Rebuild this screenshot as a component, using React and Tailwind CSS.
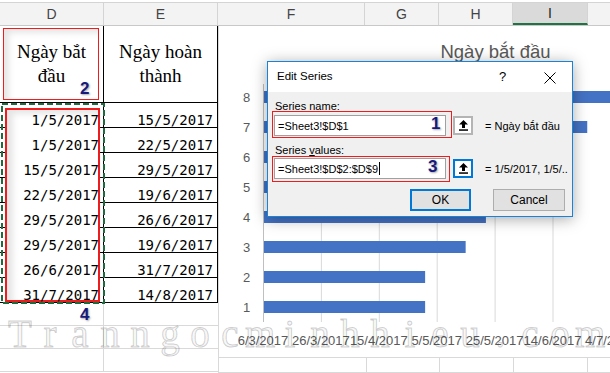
import React from "react";

const rows = [
  ["1/5/2017", "15/5/2017"],
  ["1/5/2017", "22/5/2017"],
  ["15/5/2017", "29/5/2017"],
  ["22/5/2017", "19/6/2017"],
  ["29/5/2017", "26/6/2017"],
  ["29/5/2017", "19/6/2017"],
  ["26/6/2017", "31/7/2017"],
  ["31/7/2017", "14/8/2017"],
];

const barDays = [56, 56, 70, 77, 84, 84, 112, 147];
const xLabels = ["6/3/2017", "26/3/2017", "15/4/2017", "5/5/2017", "25/5/2017", "14/6/2017", "4/7/2017"];
const watermark = "Tranngocminhhieu.com".split("");

function Chart() {
  const x0 = 44;
  const step = 57.9;
  const perDay = step / 20;
  return (
    <svg width="392" height="331" className="block" style={{ fontFamily: "'Liberation Sans', Arial, sans-serif" }}>
      <text x="276.5" y="32" textAnchor="middle" fontSize="18.5" fill="#595959">Ngày bắt đầu</text>
      {xLabels.map((_, i) => (
        <line key={"g" + i} x1={x0 + i * step + 0.5} x2={x0 + i * step + 0.5} y1="58" y2="296" stroke={i === 0 ? "#bfbfbf" : "#d9d9d9"} strokeWidth="1" />
      ))}
      {barDays.map((d, i) => {
        const cy = 281 - i * 30;
        return (
          <g key={"b" + i}>
            <rect x={x0 + 1} y={cy - 6} width={d * perDay - 1} height="12" fill="#4472c4" />
            <text x="27.5" y={cy + 4.5} textAnchor="middle" fontSize="13" fill="#595959">{i + 1}</text>
          </g>
        );
      })}
      {xLabels.map((l, i) => (
        <text key={"l" + i} x={x0 + i * step} y="319" textAnchor="middle" fontSize="13" fill="#595959">{l}</text>
      ))}
    </svg>
  );
}

function UpIcon() {
  return (
    <svg width="9" height="11" viewBox="0 0 9 11">
      <path d="M4.5 0 L9 4.5 L6 4.5 L6 8 L3 8 L3 4.5 L0 4.5 Z" fill="#000" />
      <rect x="0" y="9.3" width="9" height="1.5" fill="#000" />
    </svg>
  );
}

export default function App() {
  return (
    <div className="relative w-[610px] h-[373px] overflow-hidden bg-white">
      {/* Column headers */}
      <div className="h-[3px] bg-white border-b border-[#d4d4d4]" />
      <div className="flex h-[23px] bg-[#f3f3f3] border-b border-[#c8c8c8] text-[14px] text-[#444] font-['Liberation_Sans',Arial,sans-serif]">
        <div className="w-[104px] flex items-center justify-center border-r border-[#d4d4d4]">D</div>
        <div className="w-[114px] flex items-center justify-center border-r border-[#d4d4d4]">E</div>
        <div className="w-[147px] flex items-center justify-center border-r border-[#d4d4d4]">F</div>
        <div className="w-[74px] flex items-center justify-center border-r border-[#d4d4d4]">G</div>
        <div className="w-[74px] flex items-center justify-center border-r border-[#d4d4d4]">H</div>
        <div className="w-[75px] flex items-center justify-center bg-[#dadada] border-b-2 border-b-[#217346] border-r border-[#d4d4d4] text-[#222]">I</div>
        <div className="flex-1" />
      </div>

      {/* Body */}
      <div className="flex h-[347px]">
        {/* Table columns D and E */}
        <div className="w-[218px] flex flex-col">
          <div className="flex h-[77px] border-b border-black font-['Liberation_Serif','Times_New_Roman',serif] text-[19px] leading-[24px] text-black">
            <div className="w-[104px] flex items-center justify-center text-center border-r border-black">
              <span className="relative z-[2]">Ngày bắt<br />đầu</span>
            </div>
            <div className="w-[114px] flex items-center justify-center text-center border-r border-black">
              <span>Ngày hoàn<br />thành</span>
            </div>
          </div>
          {rows.map((r, i) => (
            <div key={i} className="flex h-[25px] border-b border-black font-['DejaVu_Sans_Mono',monospace] text-[14px] leading-[14px] text-black">
              <div className="w-[104px] flex items-end justify-end pr-[4px] border-r border-black">
                <span className="relative z-[2]">{r[0]}</span>
              </div>
              <div className="w-[114px] flex items-end justify-end pr-[4px] border-r border-black">
                <span>{r[1]}</span>
              </div>
            </div>
          ))}
          {[0, 1, 2].map((i) => (
            <div key={"e" + i} className="flex h-[23px] border-b border-[#d9d9d9]">
              <div className="w-[104px] border-r border-[#d9d9d9]" />
              <div className="flex-1" />
            </div>
          ))}
        </div>

        {/* Chart + cells under it */}
        <div className="flex-1 flex flex-col">
          <div className="h-[332px] border-l border-b border-[#d9d9d9] bg-white">
            <Chart />
          </div>
          <div className="flex h-[15px] border-l border-b border-[#d9d9d9]">
            <div className="w-[148px] border-r border-[#d9d9d9]" />
            <div className="w-[73px] border-r border-[#d9d9d9]" />
            <div className="w-[74px] border-r border-[#d9d9d9]" />
            <div className="w-[74px] border-r border-[#d9d9d9]" />
            <div className="flex-1" />
          </div>
        </div>
      </div>

      {/* Annotation: red box header D */}
      <div className="absolute left-[3px] top-[28px] w-[96px] h-[72px] z-[1] bg-white border-[1.5px] border-[#ee1c1c] shadow-[inset_5px_4px_6px_rgba(0,0,0,0.10)]" />
      {/* Annotation: red box D data */}
      <div className="absolute left-[5px] top-[108px] w-[95px] h-[194px] z-[1] bg-white border-2 border-[#ee1c1c] shadow-[inset_6px_4px_6px_rgba(0,0,0,0.10)]" />
      {/* Marquee selection */}
      <svg className="absolute left-[1px] top-[103px] z-[3]" width="105" height="202">
        <rect x="1" y="1" width="102" height="199" fill="none" stroke="#1f6b3f" strokeWidth="2" strokeDasharray="6 3" />
      </svg>
      <div className="absolute left-[80px] top-[80px] z-[3] font-['Liberation_Sans',Arial,sans-serif] font-bold text-[17px] leading-[17px] text-[#17197d] [text-shadow:1px_1px_2px_rgba(0,0,0,0.35)]">2</div>
      <div className="absolute left-[80px] top-[306px] z-[3] font-['Liberation_Sans',Arial,sans-serif] font-bold text-[17px] leading-[17px] text-[#17197d] [text-shadow:1px_1px_2px_rgba(0,0,0,0.35)]">4</div>

      {/* Watermark */}
      <div className="absolute left-[5px] top-[314px] z-[5] pointer-events-none flex whitespace-nowrap font-['Liberation_Serif','Times_New_Roman',serif] text-[39px] leading-[39px] text-[rgba(0,0,0,0.04)] [-webkit-text-stroke:1px_rgba(0,0,0,0.2)]">
        {watermark.map((c, i) => (
          <span key={i} className="w-[30px] text-center">{c}</span>
        ))}
      </div>

      {/* Dialog */}
      <div className="absolute left-[267px] top-[61px] w-[306px] h-[156px] z-[10] flex flex-col border border-[#1883d7] bg-[#f0f0f0] shadow-[0_2px_14px_rgba(0,0,0,0.35)] font-['Liberation_Sans',Arial,sans-serif] text-black">
        <div className="relative h-[30px] bg-white flex items-center pl-[9px] text-[11.5px]">
          <span>Edit Series</span>
          <span className="absolute left-[231px] top-[8px] text-[13px] leading-[13px]">?</span>
          <svg className="absolute left-[276px] top-[10px]" width="12" height="12" viewBox="0 0 12 12">
            <path d="M0.5 0.5 L11.5 11.5 M11.5 0.5 L0.5 11.5" stroke="#000" strokeWidth="1" />
          </svg>
        </div>
        <div className="flex-1 flex flex-col pl-[6px] pt-[7px] text-[11px]">
          <div className="leading-[14px] pl-[1px]">Series name:</div>
          <div className="flex items-center mt-[2px] h-[21px]">
            <div className="w-[172px] h-[21px] bg-white border border-[#a0a0a0] flex items-center pl-[3px] leading-[14px]">=Sheet3!$D$1</div>
            <div className="ml-[7px] w-[20px] h-[19px] bg-white border-2 border-[#b4b4b4] flex items-center justify-center"><UpIcon /></div>
            <div className="ml-[12px] leading-[14px]">= Ngày bắt đầu</div>
          </div>
          <div className="leading-[14px] pl-[1px] mt-[7px]">Series <span className="underline">v</span>alues:</div>
          <div className="flex items-center mt-[1px] h-[21px]">
            <div className="w-[172px] h-[21px] bg-white border border-[#a0a0a0] flex items-center pl-[3px] leading-[14px]">
              =Sheet3!$D$2:$D$9<span className="inline-block w-px h-[13px] bg-black ml-[1px]" />
            </div>
            <div className="ml-[7px] w-[20px] h-[19px] bg-white border-2 border-[#0078d7] flex items-center justify-center"><UpIcon /></div>
            <div className="ml-[12px] leading-[14px]">= 1/5/2017, 1/5/..</div>
          </div>
          <div className="flex justify-end gap-[22px] pr-[7px] mt-[10px] text-[12px]">
            <div className="w-[61px] h-[22px] bg-[#e1e1e1] border-2 border-[#0078d7] flex items-center justify-center">OK</div>
            <div className="w-[72px] h-[22px] bg-[#e1e1e1] border border-[#adadad] flex items-center justify-center">Cancel</div>
          </div>
        </div>
      </div>

      {/* Red annotation boxes on dialog */}
      <div className="absolute left-[272px] top-[111px] w-[180px] h-[27px] z-[11] border-[1.5px] border-[#ee1c1c]" />
      <div className="absolute left-[272px] top-[156px] w-[178px] h-[26px] z-[11] border-[1.5px] border-[#ee1c1c]" />
      <div className="absolute left-[431px] top-[115px] z-[12] font-['Liberation_Sans',Arial,sans-serif] font-bold text-[17px] leading-[17px] text-[#17197d] [text-shadow:1px_1px_2px_rgba(0,0,0,0.35)]">1</div>
      <div className="absolute left-[428px] top-[158px] z-[12] font-['Liberation_Sans',Arial,sans-serif] font-bold text-[17px] leading-[17px] text-[#17197d] [text-shadow:1px_1px_2px_rgba(0,0,0,0.35)]">3</div>
    </div>
  );
}
